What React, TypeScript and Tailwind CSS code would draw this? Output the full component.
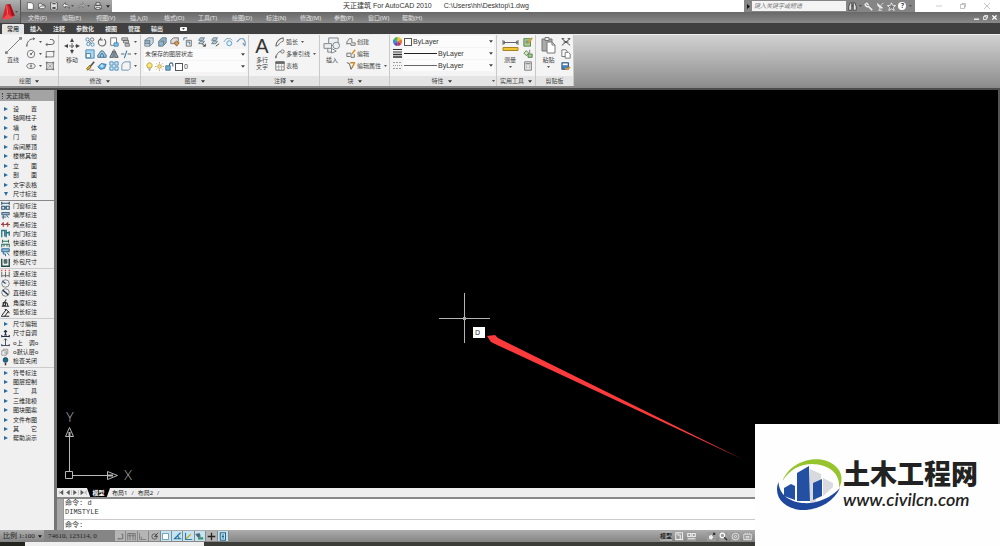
import React from 'react';
import clsx from 'clsx';

type IconProps = { children: React.ReactNode; className?: string };

const Icon: React.FC<IconProps> = ({ children, className = 'size-[10px]' }) => (
  <svg
    viewBox="0 0 12 12"
    className={clsx('shrink-0', className)}
    fill="none"
    stroke="#666"
    strokeWidth="1"
    aria-hidden="true"
  >
    {children}
  </svg>
);

const Caret: React.FC<{ className?: string }> = ({ className = 'w-[4px] h-[3px] text-[#444]' }) => (
  <svg viewBox="0 0 5 3" className={clsx('shrink-0', className)} fill="currentColor" aria-hidden="true">
    <path d="M0 0h5L2.5 3z" />
  </svg>
);

const Dot = () => <Caret className="w-[3px] h-[2px] text-[#555]" />;

/* ---------- ribbon icons ---------- */

const icons = {
  arc: <path d="M1 11C1 6 4 2 10 2M1 9v2.500M8.500 1l2 1-2 1.500" strokeWidth="1.200" />,
  circle: <><circle cx="6" cy="6" r="4.500" /><circle cx="6" cy="6" r=".8" fill="#555" /><path d="M6 6l3-3" /></>,
  ellipse: <><ellipse cx="6" cy="6" rx="5" ry="3" /><path d="M6 4v4M4.500 6h3" /></>,
  polyline: <path d="M1 9h7a3 3 0 0 0 0-6H6M1 9l2-1.500M1 9l2 1.500" strokeWidth="1.200" />,
  rect: <><path d="M1.500 3h9v6.500h-9z" /><path d="M.5 8.500h2v2h-2zM9.500 2h2v2h-2z" fill="#777" stroke="none" /></>,
  hatch: <><path d="M2 2h8v8H2z" fill="#ddd" /><path d="M4 4l4 4M8 4L4 8" stroke="#999" /><path d="M1 1h2v2H1zM9 1h2v2H9zM1 9h2v2H1zM9 9h2v2H9z" fill="#777" stroke="none" /></>,
  copy: <><circle cx="3" cy="3" r="2" stroke="#3f86b8" /><circle cx="8.500" cy="3" r="2" /><circle cx="4" cy="8.500" r="2" stroke="#3f86b8" /><circle cx="9" cy="9" r="2" stroke="#3f86b8" /><path d="M4 4l4 4" /></>,
  rotate: <path d="M4 2.300A4.500 4.500 0 1 0 8.500 2.500M4.500 .5v3H7" strokeWidth="1.300" />,
  stretch: <><path d="M2 1h7v9H2z" fill="#fff" /><path d="M6 7h5v4H6z" fill="#8cc3e4" stroke="#2f7fb5" /></>,
  stack: <path d="M1 1h7v3H1zM3 4h6v3H3zM5 8h5v3H5z" fill="#ccc" />,
  scale: <><path d="M1 1h10v10H1z" fill="#a9d4ee" stroke="#3f86b8" /><path d="M1.500 5.500h5v5h-5z" fill="#fff" stroke="#3f6f92" /></>,
  offset: <path d="M1 10V7c2 0 2-5 5-5s3 5 5 5v3zM4 10V7.500c1 0 1-2.500 2-2.500s1 2.500 2 2.500V10" fill="#9ccbe8" stroke="#39607d" />,
  mirror: <><path d="M5 2v8H1zM7 2v8h4z" fill="#8ebbd8" stroke="#444" /><path d="M6 0v12" strokeDasharray="2 1" /></>,
  trim: <><path d="M0 6h4M8 6h4" strokeWidth="1.300" /><path d="M7 2L4 11" stroke="#2f7fb5" strokeWidth="1.300" /></>,
  erase: <><path d="M11 1L6 7" stroke="#555" strokeWidth="2" /><path d="M6 5L2 9l1 2 4-3z" fill="#e2b12c" stroke="#7b5d1c" /><path d="M5 11h6" /></>,
  explode: <><path d="M1 7l4-4 6 1-2 5-5 1z" fill="#5aaee0" stroke="#2b6fa3" /><path d="M4 6h4M6 4v4" stroke="#fff" /></>,
  array: <path d="M1 1h4v4H1zM7 1h4v4H7zM1 7h4v4H1zM7 7h4v4H7z" fill="#cfe6f5" stroke="#3f86b8" />,
  fillet: <path d="M1 11V6c0-3 2-5 5-5h5M1 11h8l2-2V1" stroke="#5c88a8" />,
  layerA: <><path d="M1 4l4-3h6v6l-4 4H1z" fill="#c9dbe6" stroke="#6b7c88" /><path d="M1 6h6M1 8h6M7 11V4H1" stroke="#56707f" /></>,
  layerB: <><path d="M2 5l4-4h5v6l-4 4H2z" fill="#8fb4cc" stroke="#56707f" /><path d="M4 5h4v4" /></>,
  layerC: <><path d="M1 4l3-3h6v4L7 8H1z" fill="#ddd" /><path d="M5 7l3-2 3 2-3 4z" fill="#d79a53" stroke="#8a5a24" /></>,
  layerD: <><path d="M4 4h6v7H4z" fill="#e3eaee" /><path d="M1 1h4M1 1v3M5 6h3v3" stroke="#3f6f92" /></>,
  layerE: <><path d="M4 1h5l-2 3H2zM4 5h5L7 8H2z" fill="#b8cfdd" stroke="#5d7381" /><path d="M6 8l4 3M10 8v3H7" stroke="#333" /></>,
  layerF: <><path d="M4 1h5l-2 3H2zM4 5h5L7 8H2z" fill="#b8cfdd" stroke="#5d7381" /><path d="M7 11l4-3" stroke="#333" /></>,
  layerG: <><path d="M1 6l3-4h5l2 2" stroke="#6d9ab8" /><circle cx="7.500" cy="7.500" r="3" stroke="#4a92c2" fill="#e2f0f9" /></>,
  layerH: <path d="M1 6l4-4h4l2 4v4M8 7l3 4" stroke="#6d9ab8" strokeWidth="1.300" />,
  bulb: <><path d="M4 8C1 5 3 1 6 1s5 4 2 7z" fill="#fbe774" stroke="#a08a25" /><path d="M4.500 9.500h3M5 11h2" stroke="#777" /></>,
  sun: <><circle cx="6" cy="6" r="2.400" fill="#fae28a" stroke="#b79a2c" /><path d="M6 0v2M6 10v2M0 6h2M10 6h2M2 2l1 1M9 9l1 1M10 2L9 3M3 9l-1 1" stroke="#a98c30" /></>,
  lock: <><path d="M1 5h6v6H1z" fill="#6faed2" stroke="#2d6287" /><path d="M6 5V3a2.300 2.300 0 0 1 4.500 0v3" stroke="#39607d" strokeWidth="1.400" /></>,
  arclen: <><path d="M1 11C1 6 5 2 10 1" strokeWidth="1.300" /><path d="M4 10c1-3 3-4 6-5M10 1v4M1 11l3-1" /></>,
  leader: <><path d="M1 11C2 6 4 3 7 3M1 8v3" strokeWidth="1.200" /><circle cx="9" cy="3" r="2" /></>,
  table: <><path d="M1 1h10v10H1z" fill="#fff" /><path d="M1 1h10v2H1z" fill="#666" /><path d="M1 7h10M4.500 4v7M8 4v7" stroke="#999" /></>,
  blockNew: <path d="M1 9V6l3-4h3v5h4v3H6V8H1" fill="#eee" />,
  blockEdit: <><path d="M1 9V5h5v5h4V6M1 9h4" fill="#eee" /><path d="M11 1L7 6" stroke="#d2912c" strokeWidth="1.800" /></>,
  blockAttr: <><path d="M1 2l3 1 2 7 2-3" strokeWidth="1.200" /><path d="M5 2h6M10 3L7 8" stroke="#c98a2b" strokeWidth="1.700" /></>,
  calcNote: <><path d="M1 2h8v9H1z" fill="#a9cf92" stroke="#4c7440" /><path d="M3 5h4M3 7h4" /><path d="M11 1L7 7" stroke="#d6a02d" strokeWidth="2" /></>,
  selectAll: <><path d="M1 5l3-3 3 3-3 3z" fill="#cfe5c0" stroke="#537a46" /><path d="M6 6h5v4H6z" fill="#a5cf90" stroke="#4b6f40" /><path d="M8 1v4" /></>,
  calc: <><path d="M2 1h8v10H2z" fill="#eee" /><path d="M3 2.500h6v1.500H3z" fill="#888" stroke="none" /><path d="M4 6h1M7 6h1M4 8h1M7 8h1" /></>,
  cut: <path d="M1 2l10 8M11 2L1 10M1 2h3M11 2H8M3 6h6" stroke="#444" strokeWidth="1.100" />,
  copyDoc: <><path d="M1 1h5l1.500 2v6H1z" fill="#fff" /><path d="M5 4h4l2 2v5H5z" fill="#fff" /></>,
  match: <><path d="M1 2h8v8H1z" fill="#4e83b5" stroke="#2c4d70" /><path d="M2 3h6v2H2z" fill="#fff" stroke="none" /><path d="M5 9l3 1 3-3" stroke="#d99b38" strokeWidth="2" /></>,
};

type IconName = keyof typeof icons;

const ToolButton: React.FC<{ icon: IconName; label: string; menu?: boolean }> = ({ icon, label, menu }) => (
  <button type="button" aria-label={label} className="flex items-center gap-[3px] h-[12px] hover:bg-[#dce9f3]">
    <Icon>{icons[icon]}</Icon>
    {menu && <Dot />}
  </button>
);

const TextTool: React.FC<{ icon: IconName; label: string; menu?: boolean }> = ({ icon, label, menu }) => (
  <button type="button" className="flex items-center gap-[1px] h-[12px] whitespace-nowrap hover:bg-[#dce9f3]">
    <Icon>{icons[icon]}</Icon>
    <span>{label}</span>
    {menu && <span className="pl-[2px]"><Dot /></span>}
  </button>
);

const BigTool: React.FC<{ label: string; children: React.ReactNode; menu?: boolean }> = ({ label, children, menu }) => (
  <button type="button" className="flex flex-col items-center gap-[2px] w-[20px] h-[38px] hover:bg-[#dce9f3]">
    <span className="flex h-[19px] items-center justify-center">{children}</span>
    <span className="leading-[7px] whitespace-pre-line">{label}</span>
    {menu && <Dot />}
  </button>
);

const Panel: React.FC<{ title: string; className: string; children: React.ReactNode; menu?: boolean; corner?: boolean }> = ({
  title,
  className,
  children,
  menu = true,
  corner,
}) => (
  <section className={clsx('flex shrink-0 flex-col border-r border-[#c9c9c9] bg-[#f4f4f4]', className)}>
    <div className="flex flex-1 items-start pl-[3px] pr-[2px] pt-[1px] gap-[3px]">{children}</div>
    <footer className="flex h-[10px] items-center bg-[#e4e4e4] px-[1px]">
      <button type="button" className="flex flex-1 items-center justify-center gap-[4px] whitespace-nowrap">
        {title}
        {menu && <Caret className="w-[4px] h-[3px] text-[#333]" />}
      </button>
      {corner && <Dot />}
    </footer>
  </section>
);

const Combo: React.FC<{ label: string; value: string; before?: React.ReactNode }> = ({ label, value, before }) => (
  <div className="flex h-[11px] flex-1 items-center gap-[1px] bg-[#fcfcfc] px-[1px]">
    {before}
    <select aria-label={label} className="min-w-0 flex-1 appearance-none bg-transparent leading-[10px] outline-none">
      <option>{value}</option>
    </select>
    <Caret />
  </div>
);

const Ribbon = () => (
  <div className="flex h-[52px] bg-linear-to-b from-[#d2d2d2] to-[#8f8f8f] border-t border-[#eee] text-[6px] leading-[8px] text-[#444]">
    <Panel title="绘图" className="w-[59px]">
      <BigTool label="直线">
        <svg viewBox="0 0 18 18" className="size-[17px]" stroke="#777" fill="#888" aria-hidden="true">
          <path d="M2 16L16 2" />
          <path d="M0 15h3v3H0zM15 0h3v3h-3z" stroke="none" />
        </svg>
      </BigTool>
      <div className="flex w-[16px] flex-col">
        <ToolButton icon="arc" label="圆弧" menu />
        <ToolButton icon="circle" label="圆" menu />
        <ToolButton icon="ellipse" label="椭圆" menu />
      </div>
      <div className="flex flex-col">
        <ToolButton icon="polyline" label="多段线" />
        <ToolButton icon="rect" label="矩形" />
        <ToolButton icon="hatch" label="图案填充" />
      </div>
    </Panel>

    <Panel title="修改" className="w-[82px]">
      <BigTool label="移动">
        <svg viewBox="0 0 16 16" className="size-[16px]" fill="#444" stroke="#666" aria-hidden="true">
          <path d="M8 3v10M3 8h10" strokeDasharray="1 1" />
          <path d="M8 0l2 4H6zM8 16l2-4H6zM0 8l4-2v4zM16 8l-4-2v4z" stroke="none" />
          <path d="M7 7h2v2H7z" fill="#fff" />
        </svg>
      </BigTool>
      <div className="grid grid-cols-[10px_10px_10px_16px] gap-x-[2px]">
        <ToolButton icon="copy" label="复制" />
        <ToolButton icon="rotate" label="旋转" />
        <ToolButton icon="stretch" label="拉伸" />
        <ToolButton icon="stack" label="绘图次序" menu />
        <ToolButton icon="scale" label="缩放" />
        <ToolButton icon="offset" label="偏移" />
        <ToolButton icon="mirror" label="镜像" />
        <ToolButton icon="trim" label="修剪" menu />
        <ToolButton icon="erase" label="删除" />
        <ToolButton icon="explode" label="分解" />
        <ToolButton icon="array" label="阵列" />
        <ToolButton icon="fillet" label="圆角" menu />
      </div>
    </Panel>

    <Panel title="图层" className="w-[108px]">
      <div className="flex flex-1 flex-col">
        <div className="flex justify-between">
          <ToolButton icon="layerA" label="图层特性" />
          <ToolButton icon="layerB" label="图层状态" />
          <ToolButton icon="layerC" label="隔离" />
          <ToolButton icon="layerD" label="取消隔离" />
          <ToolButton icon="layerE" label="冻结" />
          <ToolButton icon="layerF" label="关闭" />
          <ToolButton icon="layerG" label="置为当前" />
          <ToolButton icon="layerH" label="上一个" />
        </div>
        <div className="flex h-[12px] items-center">
          <Combo label="图层状态" value="未保存的图层状态" />
        </div>
        <div className="flex pt-[1px] text-[7px]">
          <Combo
            label="图层"
            value="0"
            before={
              <>
                <Icon className="size-[9px]">{icons.bulb}</Icon>
                <Icon className="size-[9px]">{icons.sun}</Icon>
                <Icon className="size-[9px]">{icons.lock}</Icon>
                <span className="size-[8px] border border-[#555] bg-white" />
              </>
            }
          />
        </div>
      </div>
    </Panel>

    <Panel title="注释" className="w-[71px]">
      <BigTool label={'多行\n文字'}>
        <span className="font-['Liberation_Sans'] text-[20px] leading-[18px] text-[#333]">A</span>
      </BigTool>
      <div className="flex flex-col">
        <TextTool icon="arclen" label="弧长" menu />
        <TextTool icon="leader" label="多重引线" menu />
        <TextTool icon="table" label="表格" />
      </div>
    </Panel>

    <Panel title="块" className="w-[70px]">
      <BigTool label="插入">
        <svg viewBox="0 0 18 18" className="size-[17px]" fill="#eceef0" stroke="#7b848a" aria-hidden="true">
          <path d="M6 1h10v8H6z" />
          <circle cx="14" cy="9" r="3.500" />
          <path d="M1 7h8v5H1zM5 12v4h5" />
          <path d="M9 12l5 3-5 2z" fill="#fff" />
        </svg>
      </BigTool>
      <div className="flex flex-col pl-[2px]">
        <TextTool icon="blockNew" label="创建" />
        <TextTool icon="blockEdit" label="编辑" />
        <TextTool icon="blockAttr" label="编辑属性" menu />
      </div>
    </Panel>

    <Panel title="特性" className="w-[107px]" corner>
      <div className="flex flex-1 flex-col gap-[1px] font-['Liberation_Sans',sans-serif] text-[7px] text-[#333]">
        <div className="flex items-center gap-[1px]">
          <svg viewBox="0 0 12 12" className="size-[9px] shrink-0" aria-hidden="true">
            <path d="M6 6V0a6 6 0 0 1 5.200 3z" fill="#f2c230" />
            <path d="M6 6l5.200-3a6 6 0 0 1 0 6z" fill="#e8772c" />
            <path d="M6 6l5.200 3A6 6 0 0 1 6 12z" fill="#c22f5c" />
            <path d="M6 6v6a6 6 0 0 1-5.200-3z" fill="#5a46b0" />
            <path d="M6 6L.8 9a6 6 0 0 1 0-6z" fill="#2f8fd0" />
            <path d="M6 6L.8 3A6 6 0 0 1 6 0z" fill="#55b04b" />
          </svg>
          <Combo label="颜色" value="ByLayer" before={<span className="size-[8px] border border-[#555] bg-white" />} />
        </div>
        <div className="flex items-center gap-[1px]">
          <svg viewBox="0 0 9 9" className="size-[9px] shrink-0" stroke="#333" aria-hidden="true">
            <path d="M0 .5h9M0 3h9" />
            <path d="M0 5.500h9M0 8h9" strokeWidth="1.500" />
          </svg>
          <Combo label="线宽" value="ByLayer" before={<span className="w-[33px] border-t border-[#222]" />} />
        </div>
        <div className="flex items-center gap-[1px]">
          <svg viewBox="0 0 9 9" className="size-[9px] shrink-0" stroke="#999" aria-hidden="true">
            <path d="M0 1.500h9M0 7.500h9" strokeDasharray="2 1" />
            <path d="M0 4.500h9" strokeDasharray="1 1" />
          </svg>
          <Combo label="线型" value="ByLayer" before={<span className="w-[33px] border-t border-[#666]" />} />
        </div>
      </div>
    </Panel>

    <Panel title="实用工具" className="w-[39px]">
      <BigTool label="测量" menu>
        <svg viewBox="0 0 17 17" className="size-[17px]" aria-hidden="true">
          <path d="M1 3v5M16 3v5M1 5.500h15M3 4L1 5.500 3 7M14 4l2 1.500L14 7" fill="none" stroke="#666" />
          <path d="M1 10.500h15v3H1z" fill="#f0c436" stroke="#a9851f" />
        </svg>
      </BigTool>
      <div className="flex flex-col">
        <ToolButton icon="calcNote" label="快速选择" />
        <ToolButton icon="selectAll" label="全部选择" />
        <ToolButton icon="calc" label="快速计算器" />
      </div>
    </Panel>

    <Panel title="剪贴板" className="w-[38px]" menu={false}>
      <BigTool label="粘贴" menu>
        <svg viewBox="0 0 17 17" className="size-[17px]" fill="#aaa" stroke="#777" aria-hidden="true">
          <path d="M2 2h10v12H2z" />
          <path d="M5 .5h4v3H5z" fill="#eee" />
          <path d="M7 5h5l3 3v8H7z" fill="#fff" />
          <path d="M12 5v3h3" fill="none" />
        </svg>
      </BigTool>
      <div className="flex flex-col">
        <ToolButton icon="cut" label="剪切" />
        <ToolButton icon="copyDoc" label="复制剪裁" />
        <ToolButton icon="match" label="特性匹配" />
      </div>
    </Panel>
  </div>
);

/* ---------- title, menu and tab bars ---------- */

const quickAccess = [
  { label: '新建', path: <path d="M2 1h6l3 3v7H2z" fill="#fff" stroke="#444" /> },
  { label: '打开', path: <path d="M1 10V2h4l1 2h3v2M1 10l3-4h8l-3 4z" fill="#eee" stroke="#444" /> },
  { label: '保存', path: <><path d="M1 1h10v10H1z" fill="#ddd" stroke="#333" /><path d="M3 1h6v3H3zM3 7h6v4H3z" fill="#444" stroke="#eee" /></> },
  { label: '放弃', menu: true, path: <path d="M1 5l4-4v2.500c4 0 6 2 6 6-1-2-3-3-6-3V9z" fill="#eee" stroke="#444" /> },
  { label: '重做', menu: true, path: <path d="M11 5L7 1v2.500c-4 0-6 2-6 6 1-2 3-3 6-3V9z" fill="#aaa" stroke="#777" /> },
  { label: '打印', path: <><path d="M3 1h6v4H3zM1 5h10v5H1z" fill="#eee" stroke="#333" /><path d="M3 8h6v3H3z" fill="#fff" stroke="#333" /></> },
];

const infoTools = [
  { label: '搜索', menu: true, path: <path d="M1 11V6l2-5h2v10zM11 11V6L9 1H7v10zM5 5h2" fill="#ddd" stroke="#333" /> },
  { label: '速博应用中心', path: <path d="M2 2a3 3 0 0 0 4 4l5 5M3 1l3 3" stroke="#eee" strokeWidth="2" /> },
  { label: '通讯中心', path: <path d="M2 2c0 4 3 7 7 6zM6 5l4-4M3 11h5M5 8v3" fill="#eee" stroke="#eee" /> },
  { label: '收藏夹', path: <path d="M6 1l1.500 3.500 4 .3-3 2.500 1 4L6 9l-3.500 2.300 1-4-3-2.500 4-.3z" fill="#777" stroke="#fff" /> },
];

const TitleBar = () => (
  <div className="flex h-[12px] items-stretch bg-white">
    <div className="flex w-[91px] items-center justify-between bg-linear-to-b from-[#a8a8a8] to-[#8b8b8b] pl-[5px] pr-[2px]">
      {quickAccess.map((q) => (
        <button key={q.label} type="button" aria-label={q.label} className="flex items-center gap-[1px]">
          <Icon className="size-[8px]">{q.path}</Icon>
          {q.menu && <Dot />}
        </button>
      ))}
      <Caret className="w-[4px] h-[3px] text-[#222]" />
    </div>
    <h1 className="flex flex-1 items-center justify-center gap-[12px] whitespace-pre pl-[16px] font-['Liberation_Sans','Noto_Sans_CJK_SC',sans-serif] text-[7px] leading-[12px] text-[#333]">
      <span>天正建筑 For AutoCAD 2010</span>
      <span>C:\Users\hh\Desktop\1.dwg</span>
    </h1>
    <div className="flex w-[171px] items-center bg-[#858585] pr-[2px]">
      <span className="flex w-[8px] justify-center text-black">
        <svg viewBox="0 0 3 5" className="w-[3px] h-[5px]" fill="#111" aria-hidden="true"><path d="M0 0v5l3-2.500z" /></svg>
      </span>
      <input
        aria-label="搜索"
        placeholder="键入关键字或短语"
        className="h-[10px] w-[94px] bg-[#f4f4f4] px-[2px] text-[6px] italic text-[#555] outline-none placeholder:text-[#777]"
      />
      <div className="flex flex-1 items-center justify-around pl-[1px]">
        {infoTools.map((t) => (
          <button key={t.label} type="button" aria-label={t.label} className="flex items-center gap-[2px]">
            <Icon className="size-[9px]">{t.path}</Icon>
            {t.menu && <Dot />}
          </button>
        ))}
        <button type="button" className="size-[8px] rounded-full bg-white text-[7px] font-bold leading-[8px] text-[#444]">
          ?
        </button>
        <Dot />
      </div>
    </div>
    <div className="flex w-[85px] items-center justify-end gap-[18px] pr-[10px]">
      <button type="button" aria-label="最小化"><Icon className="size-[6px]"><path d="M0 6h12" stroke="#999" /></Icon></button>
      <button type="button" aria-label="还原"><Icon className="size-[6px]"><path d="M1 3h8v8H1zM4 3V1h7v7H9" stroke="#888" /></Icon></button>
      <button type="button" aria-label="关闭"><Icon className="size-[6px]"><path d="M0 0l12 12M12 0L0 12" stroke="#888" /></Icon></button>
    </div>
  </div>
);

const menus = ['文件(F)', '编辑(E)', '视图(V)', '插入(I)', '格式(O)', '工具(T)', '绘图(D)', '标注(N)', '修改(M)', '参数(P)', '窗口(W)', '帮助(H)'];

const MenuBar = () => (
  <nav className="flex h-[11px] items-center bg-linear-to-b from-[#686868] to-[#8a8a8a] pl-[7px] pr-[3px] text-[6px] leading-[10px] text-[#e4e4e4]">
    {menus.map((m) => (
      <button key={m} type="button" className="w-[34px] text-left whitespace-nowrap hover:text-white">
        {m}
      </button>
    ))}
    <div className="ml-auto flex items-center gap-[4px]">
      <button type="button" aria-label="最小化图形"><Icon className="size-[5px]"><path d="M0 10h12" stroke="#fff" strokeWidth="3" /></Icon></button>
      <button type="button" aria-label="还原图形"><Icon className="size-[5px]"><path d="M1 4h7v7H1zM4 3V1h7v7" stroke="#fff" strokeWidth="2" /></Icon></button>
      <button type="button" aria-label="关闭图形"><Icon className="size-[5px]"><path d="M1 1l10 10M11 1L1 11" stroke="#fff" strokeWidth="3" /></Icon></button>
    </div>
  </nav>
);

const tabs = ['常用', '插入', '注释', '参数化', '视图', '管理', '输出'];

const RibbonTabs = () => (
  <div className="flex h-[11px] items-end bg-[#404040] pl-[2px] text-[6px] font-bold leading-[9px] text-[#e8e8e8]">
    {tabs.map((t, i) => (
      <button
        key={t}
        type="button"
        className={clsx('h-[10px] px-[5px] whitespace-nowrap', i === 0 ? 'rounded-t-[1px] bg-[#e6e6e6] text-[#444]' : 'ml-[1px]')}
      >
        {t}
      </button>
    ))}
    <button type="button" aria-label="最小化功能区" className="mb-[3px] ml-[12px] flex h-[4px] w-[7px] items-center justify-center rounded-[1px] bg-white">
      <Caret className="w-[3px] h-[2px] text-[#444]" />
    </button>
  </div>
);

const AppButton = () => (
  <button type="button" aria-label="应用程序菜单" className="flex w-[21px] shrink-0 items-center border-r border-[#555] bg-linear-to-b from-[#b0b0b0] to-[#6f6f6f] pl-[2px]">
    <svg viewBox="0 0 14 20" className="h-[18px] w-[13px]" aria-hidden="true">
      <path d="M4 2L9 1l5 13-5 2z" fill="#9c1218" />
      <path d="M4 2l4 1 3 12-5-2-6 5z" fill="#d8232a" />
      <path d="M0 18l6-6 4 3 4-1-6 4z" fill="#ee4a4e" />
      <path d="M5 3l1 9" stroke="#ff8d8d" strokeWidth=".7" />
    </svg>
    <Dot />
  </button>
);

/* ---------- tool palette ---------- */

const paletteIcons: Record<string, React.ReactNode> = {
  门窗标注: <path d="M1 1v4M11 1v4M1 3h10M1 7h4v4H1zM7 7h4v4H7zM5 9h2" stroke="#2b5674" strokeWidth="1.500" />,
  墙厚标注: <path d="M1 2h10v3H1zM1 8h6M3 5v6M7 5l3 4" stroke="#3c5d80" fill="#9fb6cc" strokeWidth="1.200" />,
  两点标注: <><path d="M0 6h12" stroke="#333" /><path d="M3 3v6M9 3v6M1 6l2-2M7 6l2-2" stroke="#b33" strokeWidth="1.500" /></>,
  内门标注: <path d="M1 1v10M1 2h4v8M7 1v10M11 3v6M7 5h4" stroke="#267083" strokeWidth="1.700" />,
  快速标注: <path d="M2 1v4M10 1v4M2 3h8M1 11V7h10v4M4 7v3M8 7v3" stroke="#2f6c60" strokeWidth="1.400" />,
  楼梯标注: <path d="M1 1h10v4H1zM3 5v3h3v3M8 6l3 4" stroke="#2a6390" fill="#8fbad3" strokeWidth="1.200" />,
  外包尺寸: <><path d="M1 1v10h10V1" stroke="#1f4a46" strokeWidth="1.800" /><path d="M4 2h4v5H4z" fill="#43706a" /></>,
  逐点标注: <><path d="M1 4v7M6 4v7M11 4v7M1 9h10" stroke="#444" /><path d="M1 1v2M6 1v2M11 1v2" stroke="#d33" strokeWidth="1.500" /></>,
  半径标注: <><circle cx="6" cy="6" r="5" /><path d="M6 6L2 3M6 6v-1" stroke="#2a4f80" strokeWidth="1.600" /></>,
  直径标注: <><circle cx="6" cy="6" r="5" /><path d="M2.500 3l7 6" stroke="#1c3450" strokeWidth="2" /></>,
  角度标注: <path d="M1 11h10M2 10l5-8M6 6c2 0 3 2 3 5M3 6h3v4H3z" stroke="#333" strokeWidth="1.500" />,
  弧长标注: <path d="M0 11h11M1 10l6-8M5 11l5-7M5 2c3 0 5 2 6 5" stroke="#222" strokeWidth="1.300" />,
  尺寸自调: <path d="M1 10h10M1 8v3M11 8v3M6 2v6M4 4l2-2 2 2M4 8h4" stroke="#234" strokeWidth="1.500" />,
  'o上　调o': <path d="M1 10h10M1 8v3M11 8v3M6 1v9M4 3l2-2 2 2" stroke="#345" strokeWidth="1.200" />,
  o默认层o: <path d="M1 5h6v6H1zM3 5V3h6v6H7M4 8h3" stroke="#888" />,
  检查关闭: <><circle cx="6" cy="4" r="3.200" fill="#1f6a86" stroke="#124457" /><path d="M5 8h2v3H5z" fill="#333" stroke="none" /></>,
};

const paletteGroups = [
  { height: 'h-[95px]', items: ['设　　置', '轴网柱子', '墙　　体', '门　　窗', '房间屋顶', '楼梯其他', '立　　面', '剖　　面', '文字表格', '尺寸标注'] },
  { height: 'h-[66px]', items: ['门窗标注', '墙厚标注', '两点标注', '内门标注', '快速标注', '楼梯标注', '外包尺寸'] },
  { height: 'h-[48px]', items: ['逐点标注', '半径标注', '直径标注', '角度标注', '弧长标注'] },
  { height: 'h-[47px]', items: ['尺寸编辑', '尺寸自调', 'o上　调o', 'o默认层o', '检查关闭'] },
  { height: 'h-[75px]', items: ['符号标注', '图层控制', '工　　具', '三维建模', '图块图案', '文件布图', '其　　它', '帮助演示'] },
];

const PaletteItem: React.FC<{ label: string }> = ({ label }) => (
  <button type="button" className="flex flex-1 items-center whitespace-nowrap text-left hover:bg-[#dce9f3]">
    <span className="flex w-[13px] justify-center pr-[2px]">
      {paletteIcons[label] ? (
        <Icon className="size-[9px]">{paletteIcons[label]}</Icon>
      ) : (
        <svg
          viewBox="0 0 4 4"
          className={clsx('size-[4px]', label === '尺寸标注' && 'rotate-90')}
          fill="#2c6c9c"
          aria-hidden="true"
        >
          <path d="M0 0v4l4-2z" />
        </svg>
      )}
    </span>
    {label}
  </button>
);

const Palette = () => (
  <aside className="flex w-[57px] shrink-0 flex-col border-r-[3px] border-[#757575] bg-[#f0f0f0] text-[6px] leading-[8px] text-[#222]">
    <header className="mb-[3px] flex h-[11px] items-center gap-[3px] bg-[#a3a3a3] pl-[2px] text-[#222]">
      <span className="h-[6px] border-l border-dotted border-[#444]" />
      天正建筑
    </header>
    {paletteGroups.map((g, i) => (
      <div key={i} className={clsx('flex flex-col', g.height, i > 0 && 'mt-[1px] box-content border-t', i === 1 ? 'border-[#888]' : 'border-[#ccc]')}>
        {g.items.map((item) => (
          <PaletteItem key={item} label={item} />
        ))}
      </div>
    ))}
  </aside>
);

/* ---------- drawing area ---------- */

const Canvas = () => (
  <main className="relative flex-1 overflow-hidden border-r-2 border-[#555] bg-black">
    {/* crosshair and red pointer */}
    <svg className="absolute left-0 top-0 h-[380px] w-[700px]" fill="none" aria-hidden="true">
      <path d="M407.500 203v50M382 228.500h51" stroke="#b5b5b5" />
      <path d="M406 227h3v3h-3z" fill="#aaa" />
      <path d="M430 246l8-1 3 3 244 121-247-115-4-2z" fill="#fb3a3c" />
    </svg>
    <input
      aria-label="动态输入"
      defaultValue="D"
      className="absolute left-[416px] top-[237px] h-[11px] w-[12px] bg-white px-[2px] text-[7px] leading-[11px] text-[#333] outline-none"
    />
    {/* UCS icon */}
    <svg viewBox="0 0 80 80" className="absolute bottom-0 left-[4px] size-[80px]" fill="none" stroke="#b8b8b8" aria-hidden="true">
      <path d="M4.500 63.500h7v7h-7zM8.500 63V28M12 67.500h34" />
      <path d="M8.500 19.500l-4 9h8zM56.500 67.500l-10-4v8z" />
      <path d="M8.500 24v4M52 67.500h-5" strokeWidth="2" />
      <text x="5" y="14" fontSize="13" fontFamily="Lato, sans-serif" fontWeight="300" fill="#b8b8b8" stroke="none">Y</text>
      <text x="63" y="72" fontSize="13" fontFamily="Lato, sans-serif" fontWeight="300" fill="#b8b8b8" stroke="none">X</text>
    </svg>
  </main>
);

const LayoutTabs = () => (
  <div className="flex h-[9px] items-center border-r-2 border-[#555] bg-[#eee] text-[6px] leading-[8px] text-[#222]">
    <div className="flex w-[30px] items-center justify-around">
      {['M3 1v4M8 0v6L4 3z', 'M6 0v6L2 3z', 'M2 0v6l4-3z', 'M1 0v6l4-3zM7 1v4'].map((d) => (
        <button key={d} type="button" aria-label="滚动标签" className="border-r border-[#ccc]">
          <svg viewBox="0 0 8 6" className="h-[5px] w-[6px]" fill="#555" stroke="#555" strokeWidth=".5" aria-hidden="true"><path d={d} /></svg>
        </button>
      ))}
    </div>
    <button type="button" className="h-full w-[23px] bg-black text-center text-white [clip-path:polygon(0_0,100%_0,86%_100%,14%_100%)] font-bold">
      模型
    </button>
    <button type="button" className="pl-[2px] pr-[4px]">布局1</button>
    <span className="text-[#555]">/</span>
    <button type="button" className="px-[4px]">布局2</button>
    <span className="text-[#555]">/</span>
  </div>
);

const CommandLine = () => (
  <div className="flex h-[33px] border-t-2 border-[#888] bg-white">
    <div className="w-[7px] bg-[#a8a8a8] border-r border-[#999]" />
    <div className="flex flex-1 flex-col font-['Liberation_Mono','Noto_Sans_CJK_SC',monospace] text-[7px] leading-[9px] text-[#333]">
      <div className="flex-1 border-b border-[#ccc] pl-[1px]">
        <p>命令: d</p>
        <p>DIMSTYLE</p>
      </div>
      <label className="flex h-[10px] items-center gap-[4px] pl-[1px]">
        命令:
        <input className="h-[9px] flex-1 bg-transparent outline-none" />
      </label>
    </div>
  </div>
);

/* ---------- status bar ---------- */

const toggles = [
  { label: '捕捉模式', on: false, path: <path d="M2 9h7V3M9 3H7M4 9v1" stroke="#555" /> },
  { label: '栅格显示', on: false, path: <path d="M1 2h10v9M1 2v9M4 2v9M8 2v9M1 5h10" stroke="#666" /> },
  { label: '正交模式', on: false, path: <path d="M2 1v9h9M2 7h3v3" stroke="#777" /> },
  { label: '极轴追踪', on: false, path: <><circle cx="6" cy="6" r="3.500" stroke="#444" /><path d="M6 6l5-5M6 6h4" stroke="#333" /></> },
  { label: '对象捕捉', on: true, path: <path d="M2 2h8v8H2z" fill="#fff" stroke="#4a8fb2" /> },
  { label: '对象捕捉追踪', on: true, path: <path d="M10 1L2 9h9M6 5l3 4" stroke="#24719f" strokeWidth="1.500" /> },
  { label: '动态 UCS', on: true, path: <><path d="M2 1v9h9" stroke="#2f7fa8" strokeWidth="1.500" /><path d="M3 9l6-6" stroke="#c9a41e" strokeWidth="1.500" /></> },
  { label: '动态输入', on: true, path: <><path d="M1 3l5-1 1 4-3 1z" fill="#27708e" /><path d="M4 7h7v3H4z" fill="#3c8f6c" stroke="none" /></> },
  { label: '线宽', on: false, path: <path d="M6 1v10M1 6h10" stroke="#222" strokeWidth="1.700" /> },
  { label: '快捷特性', on: true, path: <path d="M3 1h7v10H3zM5 4h3M5 6h3M5 8h3" stroke="#2a6787" strokeWidth="1.400" /> },
];

const viewTools = [
  <path d="M1 1h9v9H1zM4 1v3h3v6" stroke="#eee" strokeWidth="1.400" />,
  <path d="M1 2h4v4H1zM7 2h4v4H7zM1 9h10" stroke="#eee" strokeWidth="1.500" />,
  <><path d="M2 5l4-2 3 4-3 4-4-2z" fill="#eee" stroke="#888" /><path d="M8 1h3v3H8z" fill="#333" stroke="none" /></>,
  <><circle cx="4.500" cy="4.500" r="3" stroke="#fff" strokeWidth="1.500" /><path d="M7 7l4 4" stroke="#333" strokeWidth="2" /></>,
  <><circle cx="6" cy="6" r="4.500" stroke="#eee" /><circle cx="6" cy="6" r="1.500" stroke="#eee" /></>,
  <path d="M1 3h10v7H1zM3 1v2M6 1v2M9 1v2M4 6h4v2H4z" stroke="#eee" />,
];

const StatusBar = () => (
  <footer className="flex h-[12px] items-center bg-linear-to-b from-[#acacac] to-[#858585] font-['Liberation_Serif','Noto_Sans_CJK_SC',serif] text-[7px] leading-[10px] text-[#222]">
    <button type="button" className="flex w-[44px] items-center gap-[3px] pl-[3px] whitespace-nowrap">
      比例 1:100
      <Caret className="w-[4px] h-[3px] text-[#111]" />
    </button>
    <span className="w-[71px] pl-[4px] h-full bg-[#858585] leading-[12px] whitespace-nowrap">74610, 123114, 0</span>
    <div className="grid w-[114px] grid-cols-10">
      {toggles.map((t) => (
        <button
          key={t.label}
          type="button"
          aria-label={t.label}
          aria-pressed={t.on}
          className={clsx('flex h-[10px] items-center justify-center border-r border-[#888]', t.on ? 'bg-[#c4e4f2]' : 'bg-[#b5b5b5]')}
        >
          <Icon className="size-[9px]">{t.path}</Icon>
        </button>
      ))}
    </div>
    <div className="ml-auto flex items-center gap-[3px] pr-[248px]">
      <button type="button" className="bg-[#b0b0b0] text-[6px] font-bold">模型</button>
      {viewTools.map((v, i) => (
        <button key={i} type="button" aria-label={`视图工具 ${i + 1}`} className={clsx('bg-[#9b9b9b]', i === 2 && 'ml-[8px]')}>
          <Icon className="size-[9px]">{v}</Icon>
        </button>
      ))}
    </div>
  </footer>
);

const Taskbar = () => (
  <div className="flex h-[4px] bg-[#3c3d38]">
    <div className="w-[25px] bg-[#25251f]" />
    <div className="w-[179px] bg-[#efefef]" />
  </div>
);

const SiteLogo = () => (
  <a href="#civilcn" className="absolute bottom-0 right-0 flex h-[122px] w-[245px] items-center bg-[#fefefe] pl-[21px] text-[#222]">
    <svg viewBox="21 34 67 54" className="h-[54px] w-[67px] shrink-0" aria-hidden="true">
      <path d="M55 45l11 5v13l-5 1v14l-6 1zM68 54l10 5v4l-10 9z" fill="#d9dadd" />
      <path d="M42 49l12-7 1 35H42zM29 64l7-4 4 2v14l-11-4zM58 59l9-4v17l-9 4z" fill="#2450a4" />
      <path d="M27.500 57C35 38 58 32 72 37c13 5 18 16 12 27 1-10-4-18-15-22-14-5-32-1-41.500 15z" fill="#95c42d" />
      <path d="M23.500 58C18 72 28 84 45 86c17 1 34-8 40-22-10 11-25 16-37 15-14-1-24-9-24.500-21z" fill="#1f479c" />
    </svg>
    <span className="flex flex-col items-start whitespace-nowrap">
      <span className="font-['Liberation_Sans','Noto_Sans_CJK_SC',sans-serif] text-[27px] font-black leading-[27px] [font-style:oblique_8deg]">土木工程网</span>
      <span className="font-['Lato',sans-serif] text-[18px] font-semibold italic leading-[20px]">www.civilcn.com</span>
    </span>
  </a>
);

const App: React.FC = () => {
  return (
    <div className="relative flex h-screen flex-col overflow-hidden bg-[#6c6c6c] font-['Noto_Sans','Noto_Sans_CJK_SC',sans-serif]">
      <div className="flex">
        <AppButton />
        <div className="flex-1">
          <TitleBar />
          <MenuBar />
        </div>
      </div>
      <RibbonTabs />
      <Ribbon />
      <div className="h-[4px] border-b-2 border-[#4c4c4c] bg-[#8a8a8a]" />
      <div className="flex min-h-0 flex-1">
        <Palette />
        <div className="flex min-w-0 flex-1 flex-col">
          <Canvas />
          <LayoutTabs />
          <CommandLine />
        </div>
      </div>
      <StatusBar />
      <Taskbar />
      <SiteLogo />
    </div>
  );
};

export default App;
